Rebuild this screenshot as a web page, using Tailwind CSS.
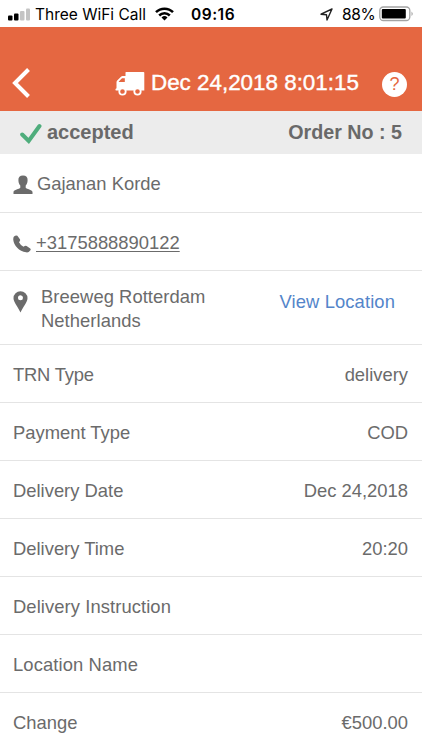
<!DOCTYPE html>
<html lang="en">

<head>
    <meta charset="UTF-8">
    <meta name="viewport" content="width=device-width, initial-scale=1.0">
    <title>Order details</title>
    <script src="https://cdn.jsdelivr.net/npm/@tailwindcss/browser@4"></script>
</head>

<body class="bg-white h-[750px] overflow-hidden font-['Liberation_Sans',sans-serif] text-[18.4px] text-[#6b6b6b]">

    <!-- Status bar -->
    <div class="flex items-center h-[27px] pt-0.5 pl-2 text-black font-[Inter,sans-serif] text-[15.5px] whitespace-nowrap">
        <svg class="w-[23px] h-[13px] shrink-0" viewBox="0 0 23 13">
            <rect x="0" y="7.5" width="4.5" height="5" rx="1" />
            <rect x="6" y="5.5" width="4.5" height="7" rx="1" />
            <rect x="12" y="3" width="4.5" height="9.5" rx="1" fill="#c4c4c4" />
            <rect x="18" y="0.5" width="4" height="12" rx="1" fill="#c4c4c4" />
        </svg>
        <span class="ml-1 w-[112px]">Three WiFi Call</span>
        <svg class="ml-2 mb-0.5 w-[19px] h-[14px] shrink-0" viewBox="0 0 19 14" fill="none" stroke="#000" stroke-width="2.5">
            <path d="M1 5.2a12 12 0 0 1 17 0" />
            <path d="M4.2 8.5a7.5 7.5 0 0 1 10.6 0" />
            <path d="M9.5 13.5l-3-3a4.3 4.3 0 0 1 6 0z" fill="#000" stroke="none" />
        </svg>
        <span class="ml-[17px] w-[45px] font-semibold tracking-[0.5px]">09:16</span>
        <svg class="ml-[84px] mb-px w-[13px] h-[13px] shrink-0" viewBox="0 0 13 13" fill="none" stroke="#222" stroke-width="1.4" stroke-linejoin="round">
            <path d="M12 1L1 6.2l5.500.5L7 12z" />
        </svg>
        <span class="ml-[9px] w-[33px] tracking-[-0.3px]">88%</span>
        <svg class="ml-1 mb-px w-[35px] h-[16px] shrink-0" viewBox="0 0 35 16">
            <rect x="0.8" y="1" width="30" height="13.5" rx="3.5" fill="none" stroke="#a3a3a3" stroke-width="1.3" />
            <rect x="2.8" y="3" width="24" height="9.5" rx="1" />
            <path d="M32.500 5.500q2.500 2.300 0 4.600z" fill="#a3a3a3" />
        </svg>
    </div>

    <!-- Header -->
    <header class="flex items-center h-[84px] pt-[28px] pl-3 pr-[15px] bg-[#e56741] text-white">
        <svg class="w-[19px] h-[30px] shrink-0" viewBox="0 0 19 30" fill="none" stroke="#fff" stroke-width="4">
            <path d="M16.5 1.5L3 15l13.5 13.5" />
        </svg>
        <svg class="ml-[84px] mt-0.5 w-[30px] h-[26px] shrink-0" viewBox="0 0 30 26" fill="#fff">
            <path d="M11 1h17.500q.8 0 .8.8v17.700h-28q-1.200 0-.8-1.500l1-.8v-6q0-1 .7-1.800l3.800-3.700q.7-.7 1.500-.7h3V1.500q0-.5.5-.5z" />
            <path d="M3.800 11v-.5L7 7.300h2.800V11z" fill="#e56741" />
            <circle cx="7.500" cy="20.500" r="3.200" fill="#e56741" stroke="#fff" stroke-width="1.800" />
            <circle cx="22.500" cy="20.500" r="3.200" fill="#e56741" stroke="#fff" stroke-width="1.800" />
        </svg>
        <h1 class="ml-1.5 w-[209px] text-[22.4px] whitespace-nowrap [-webkit-text-stroke:0.4px_white]">Dec 24,2018 8:01:15</h1>
        <span class="ml-auto mt-0.5 flex items-center justify-center w-[25px] h-[25px] rounded-full bg-white text-[#e56741] text-[18px]">?</span>
    </header>

    <!-- Order status -->
    <div class="flex items-center justify-between h-[43px] px-5 bg-[#ececec] text-[#696969] font-bold">
        <div class="flex items-center">
            <svg class="mt-[3px] w-[22px] h-[22px]" viewBox="0 0 22 22" fill="none" stroke="#4fad7c" stroke-width="4" stroke-linecap="round">
                <path d="M2.200 11.500l6.500 6.500L19.500 3" />
            </svg>
            <span class="ml-[5px] pb-0.5 text-[20px]">accepted</span>
        </div>
        <span class="text-[19.7px]">Order No : 5</span>
    </div>

    <!-- Customer -->
    <div class="flex items-center h-[59px] pl-[13px] pt-0.5 border-b border-[#e4e4e4]">
        <svg class="w-[20px] h-[20px] mt-0.5" viewBox="0 0 20 20" fill="#6b6b6b">
            <path d="M10 .5c3.200 0 4.800 2 4.600 4.700-.1 3-1 4.200-1.900 5.300v2.300c1 1.500 6.300 1.700 6.800 4.200V19H.5v-2c.4-2.500 5.800-2.700 6.800-4.200v-2.300C6.400 9.400 5.500 8.200 5.400 5.200 5.200 2.500 6.800.5 10 .5z" />
        </svg>
        <span class="ml-1">Gajanan Korde</span>
    </div>
    <div class="flex items-center h-[58px] pl-[13px] pt-0.5 border-b border-[#e4e4e4]">
        <svg class="w-[18px] h-[18px] mt-0.5" viewBox="0 0 18 18" fill="#6b6b6b">
            <path d="M1 1.500Q3-.3 4.400.8L6.900 4.200q.6 1-.2 2l-.7 1q1.500 3 4.500 4.600l1.200-.7q1-.6 1.900 0l3.600 2.500q1 .9 0 1.900-1.700 2.300-4 1.800C6 16.300.8 10.500.3 5Q.1 2.600 1 1.500z" />
        </svg>
        <a class="ml-[5px] underline decoration-1 underline-offset-2">+3175888890122</a>
    </div>
    <div class="flex items-start h-[74px] pl-[13px] pr-[27px] pt-[14px] border-b border-[#e4e4e4]">
        <svg class="w-[15px] h-[22px] mt-[6px]" viewBox="0 0 15 22" fill="#6b6b6b" fill-rule="evenodd">
            <path d="M7.500.3a7 7 0 0 1 7 7c0 3.500-4.500 9-7 14.200C5 16.300.5 10.800.5 7.300a7 7 0 0 1 7-7zM7.500 4.300a2.500 2.500 0 1 0 0 5 2.500 2.500 0 0 0 0-5z" />
        </svg>
        <div class="ml-[13px] leading-6 tracking-[0.05px]">Breeweg Rotterdam<br>Netherlands</div>
        <a class="ml-auto mt-[5px] leading-6 tracking-[0.1px] text-[#5485ca]">View Location</a>
    </div>

    <!-- Transaction details -->
    <div class="[&>div]:flex [&>div]:items-center [&>div]:justify-between [&>div]:h-[58px] [&>div]:pt-0.5 [&>div]:pl-[13px] [&>div]:pr-[14px] [&>div]:border-b [&>div]:border-[#e4e4e4]">
        <div><span class="tracking-[-0.2px]">TRN Type</span><span>delivery</span></div>
        <div><span>Payment Type</span><span>COD</span></div>
        <div><span>Delivery Date</span><span>Dec 24,2018</span></div>
        <div><span>Delivery Time</span><span>20:20</span></div>
        <div><span class="tracking-[0.08px]">Delivery Instruction</span></div>
        <div><span class="tracking-[0.1px]">Location Name</span></div>
        <div><span>Change</span><span>€500.00</span></div>
    </div>

</body>

</html>
